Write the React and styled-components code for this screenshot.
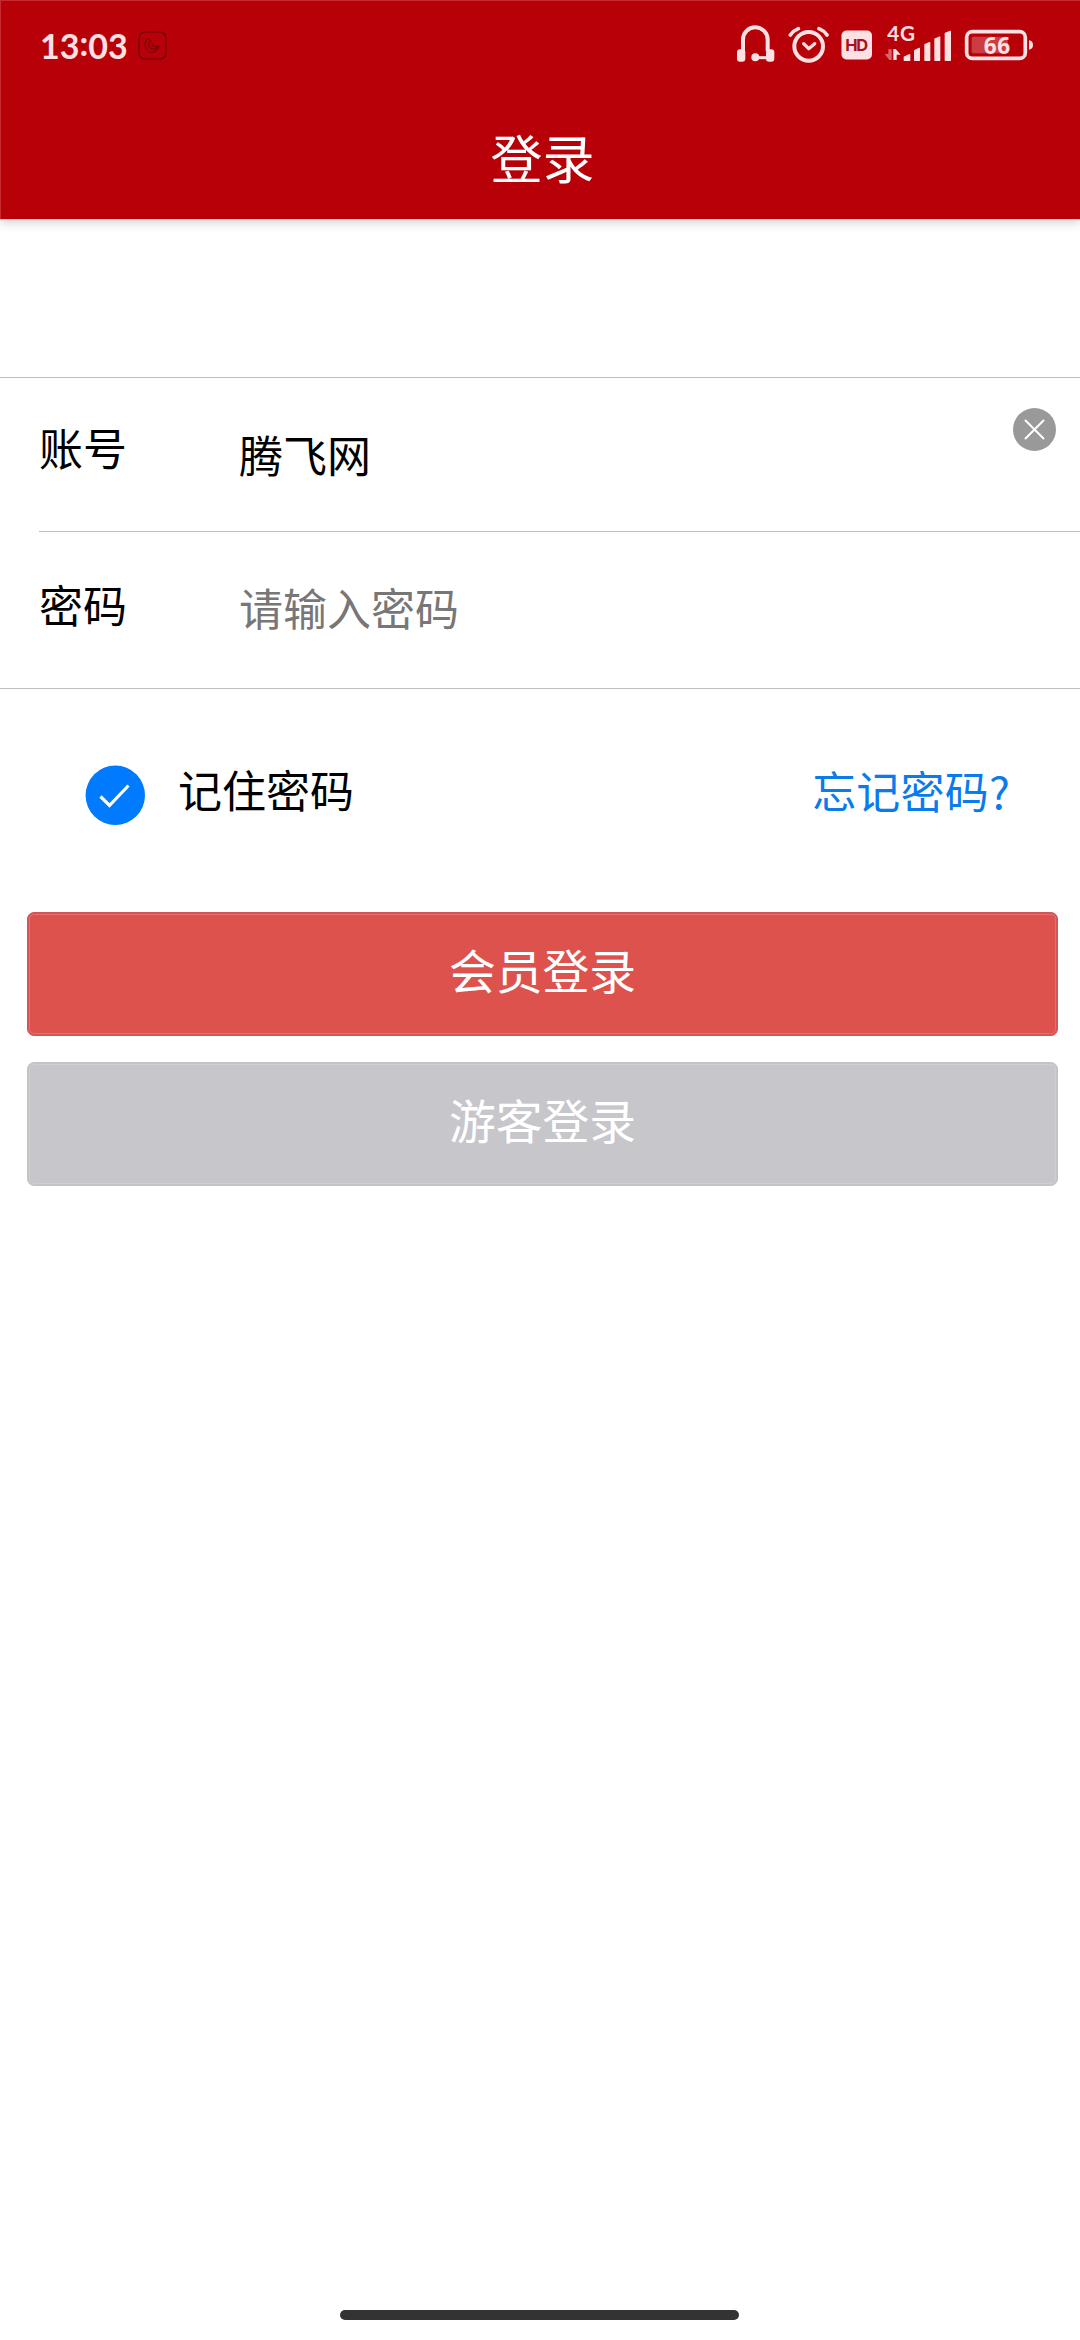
import { useState } from "react";
import styled, { createGlobalStyle } from "styled-components";

const GlobalStyle = createGlobalStyle`
  * {
    box-sizing: border-box;
  }

  body {
    margin: 0;
    background: #fff;
    font-family: "Noto Sans CJK SC", sans-serif;
  }
`;

const Page = styled.div`
  display: flex;
  flex-direction: column;
  width: 1080px;
  height: 2340px;
  background: #fff;
  color: #000;
`;

const Header = styled.header`
  height: 219px;
  background: #b80009;
  box-shadow: inset 1px 1px 0 #c62a30, 0 1px 0 #f3c3c5,
    0 1px 12px rgba(0, 0, 0, 0.28);
`;

const StatusBar = styled.div`
  display: flex;
  justify-content: space-between;
  height: 90px;
  padding: 14px 47px 0 40px;
`;

const StatusGroup = styled.div`
  display: flex;
  align-items: flex-start;
`;

const Clock = styled.span`
  display: flex;
  width: 98px;
  padding-top: 10px;
  font-family: Lato, sans-serif;
  font-size: 34px;
  font-weight: 700;
  line-height: 43px;
  color: #ffe1e3;
`;

const Colon = styled.span`
  margin-top: -3px;
`;

const StatusIcon = styled.svg`
  display: block;
  margin-left: ${(props) => props.$gap || 0}px;
  margin-top: ${(props) => props.$top || 0}px;
  color: #ffe1e3;
`;

const Title = styled.h1`
  margin: 0;
  padding: 41px 0 0 5px;
  text-align: center;
  font-size: 52px;
  font-weight: 400;
  line-height: 52px;
  color: #fff;
`;

const Form = styled.form`
  display: flex;
  flex-direction: column;
  margin-top: 158px;
`;

const FieldList = styled.div`
  border-top: 1px solid #bebebf;
  border-bottom: 1px solid #bebebf;
`;

const Field = styled.div`
  display: flex;
  align-items: flex-start;
  height: ${(props) => props.$height}px;
  margin-left: 39px;
  padding-right: 24px;

  & + & {
    border-top: 1px solid #bebebf;
  }
`;

const Label = styled.label`
  width: 200px;
  padding-top: ${(props) => props.$top}px;
  font-size: 44px;
  line-height: 44px;
`;

const Input = styled.input`
  flex: 1;
  min-width: 0;
  height: 64px;
  margin-top: ${(props) => props.$top}px;
  padding: 0;
  border: none;
  outline: none;
  background: transparent;
  font-family: inherit;
  font-size: 44px;
  color: #000;

  &::placeholder {
    color: #777;
    opacity: 1;
  }
`;

const ClearButton = styled.button`
  width: 43px;
  height: 43px;
  margin-top: 30px;
  padding: 0;
  border: none;
  background: none;

  svg {
    display: block;
  }
`;

const Options = styled.div`
  display: flex;
  justify-content: space-between;
  padding: 76px 70px 0 85px;
`;

const Remember = styled.label`
  display: flex;
  font-size: 44px;
  line-height: 60px;
`;

const CheckMark = styled.svg`
  display: block;
  margin-right: 33px;
`;

const OptionText = styled.span`
  margin-top: -6px;
`;

const ForgotLink = styled.a`
  margin-top: -5px;
  font-size: 44px;
  line-height: 60px;
  letter-spacing: 0.2px;
  color: #0a7bea;
  text-decoration: none;
`;

const Actions = styled.div`
  display: flex;
  flex-direction: column;
  gap: 26px;
  padding: 87px 22px 0 27px;
`;

const Button = styled.button`
  height: 124px;
  padding: 0 0 10px;
  border: 1px solid ${(props) => props.$edge};
  border-radius: 7px;
  box-shadow: inset 0 0 0 1px ${(props) => props.$edge},
    inset 0 0 0 2px ${(props) => props.$inner};
  background: ${(props) => props.$color};
  font-family: inherit;
  font-size: 46.8px;
  line-height: 60px;
  color: #fff;
`;

const HomeIndicator = styled.div`
  width: 399px;
  height: 10px;
  margin: auto auto 20px 340px;
  border-radius: 5px;
  background: #333;
`;

const AppBadge = () => (
  <StatusIcon $top={17} width="29" height="29" viewBox="0 0 29 29" fill="none">
    <rect x="1" y="1" width="27" height="27" rx="6" stroke="#6e0209" strokeWidth="1.2" />
    <path
      d="M12 7c-5 1.500-6.500 7-4 11s8 4.500 11 1c1.500-1.500 1.500-4 1-5M13 9c-3 3-3 7 0 8.500s6 .5 6-3M14 12c0 3 2 4 4 3"
      stroke="#7c0309"
      strokeWidth="1.2"
    />
  </StatusIcon>
);

const HeadsetIcon = () => (
  <StatusIcon $top={10} width="39" height="39" viewBox="48 42 117 117">
    <path d="M69 124V89a37 37 0 0 1 74 0v35" fill="none" stroke="currentColor" strokeWidth="12" />
    <rect x="51" y="118" width="25" height="37" rx="9" fill="currentColor" />
    <rect x="138" y="118" width="25" height="37" rx="9" fill="currentColor" />
    <path d="M106 143h40" stroke="currentColor" strokeWidth="9" />
    <circle cx="106" cy="142" r="12" fill="currentColor" />
  </StatusIcon>
);

const AlarmIcon = () => (
  <StatusIcon $gap={13} $top={10} width="41" height="39" viewBox="204 42 123 117">
    <g fill="none" stroke="currentColor" strokeLinecap="round" strokeLinejoin="round">
      <circle cx="266" cy="109" r="43" strokeWidth="12" />
      <path d="M251 101l15 15 18-15" strokeWidth="10" />
      <path d="M211 75q9-13 24-19M297 56q15 6 24 19" strokeWidth="11" />
    </g>
  </StatusIcon>
);

const HdIcon = () => (
  <StatusIcon $gap={12} $top={16} width="31" height="30" viewBox="0 0 31 30">
    <rect x="0.500" y="0.500" width="30.500" height="29" rx="5" fill="currentColor" />
    <text
      x="15.700"
      y="20.700"
      textAnchor="middle"
      fontFamily="Inter, sans-serif"
      fontSize="16.500"
      fontWeight="700"
      textLength="23"
      fill="#a8101a"
    >
      HD
    </text>
  </StatusIcon>
);

const SignalIcon = () => (
  <StatusIcon $gap={12} width="68" height="50" viewBox="39 12 204 150">
    <text x="49" y="94" fontFamily="Lato, sans-serif" fontSize="62" fontWeight="700" textLength="83" fill="currentColor">
      4G
    </text>
    <path d="M62 118v32h-7l-14-18h11v-14z" fill="currentColor" opacity="0.45" />
    <path d="M67 150v-33h7l15 17H77v16z" fill="currentColor" />
    <g fill="currentColor" stroke="currentColor" strokeWidth="4" strokeLinejoin="round">
      <path d="M100 141l16-7v17h-16z" />
      <path d="M131 122l14-7v36h-14z" />
      <path d="M162 104l14-6v53h-14z" />
      <path d="M192 87l14-6v70h-14z" />
      <path d="M223 70l15-6v87h-15z" />
    </g>
  </StatusIcon>
);

const BatteryIcon = ({ level }) => (
  <StatusIcon $gap={12} $top={10} width="69" height="40" viewBox="279 42 207 120">
    <rect x="287" y="65" width="176" height="80" rx="17" fill="none" stroke="currentColor" strokeWidth="11" />
    <rect x="302" y="80" width="108" height="50" rx="5" fill="currentColor" opacity="0.27" />
    <path d="M474 91q12 2 12 14t-12 14z" fill="currentColor" />
    <text
      x="378"
      y="131"
      textAnchor="middle"
      fontFamily="Open Sans, sans-serif"
      fontSize="68"
      fontWeight="700"
      textLength="80"
      fill="currentColor"
    >
      {level}
    </text>
  </StatusIcon>
);

const App = () => {
  const [account, setAccount] = useState("腾飞网");
  const [password, setPassword] = useState("");

  return (
    <Page>
      <GlobalStyle />
      <Header>
        <StatusBar>
          <StatusGroup>
            <Clock>
              13<Colon>:</Colon>03
            </Clock>
            <AppBadge />
          </StatusGroup>
          <StatusGroup>
            <HeadsetIcon />
            <AlarmIcon />
            <HdIcon />
            <SignalIcon />
            <BatteryIcon level={66} />
          </StatusGroup>
        </StatusBar>
        <Title>登录</Title>
      </Header>

      <Form onSubmit={(e) => e.preventDefault()}>
        <FieldList>
          <Field $height={153}>
            <Label htmlFor="account" $top={47}>账号</Label>
            <Input
              id="account"
              $top={44}
              value={account}
              onChange={(e) => setAccount(e.target.value)}
            />
            <ClearButton type="button" onClick={() => setAccount("")}>
              <svg width="43" height="43" viewBox="0 0 43 43">
                <circle cx="21.500" cy="21.500" r="21.500" fill="#999" />
                <path
                  d="M12.500 12.500l18 18M30.500 12.500l-18 18"
                  stroke="#fff"
                  strokeWidth="2"
                  strokeLinecap="round"
                />
              </svg>
            </ClearButton>
          </Field>
          <Field $height={157}>
            <Label htmlFor="password" $top={50}>密码</Label>
            <Input
              id="password"
              type="password"
              $top={43}
              placeholder="请输入密码"
              value={password}
              onChange={(e) => setPassword(e.target.value)}
            />
          </Field>
        </FieldList>

        <Options>
          <Remember>
            <CheckMark width="60" height="60" viewBox="0 0 60 60">
              <circle cx="30.300" cy="30.300" r="29.700" fill="#007aff" />
              <path d="M15.500 31.500l9 9 19-20" fill="none" stroke="#fff" strokeWidth="3.200" />
            </CheckMark>
            <OptionText>记住密码</OptionText>
          </Remember>
          <ForgotLink href="#">忘记密码?</ForgotLink>
        </Options>

        <Actions>
          <Button type="submit" $color="#dd524d" $edge="#d4545a" $inner="#e2716d">
            会员登录
          </Button>
          <Button type="button" $color="#c7c6cb" $edge="#c4c3c5" $inner="#cfced2">
            游客登录
          </Button>
        </Actions>
      </Form>

      <HomeIndicator />
    </Page>
  );
};

export default App;
